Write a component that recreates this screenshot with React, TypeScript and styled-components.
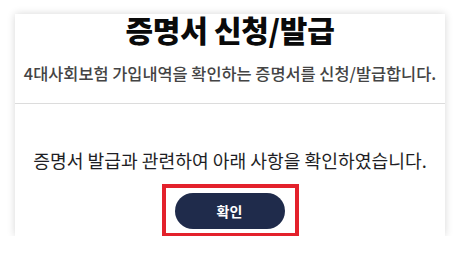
import styled, { createGlobalStyle } from 'styled-components';

const GlobalStyle = createGlobalStyle`
  html, body {
    margin: 0;
    padding: 0;
    background: #ffffff;
  }
  body {
    font-family: "Noto Sans CJK KR", "Noto Sans", sans-serif;
    color: #222;
  }
`;

const Card = styled.div`
  width: 430px;
  margin: 14px 0 0 15px;
  background: #fff;
  box-shadow: 0 0 8px rgba(0, 0, 0, 0.16);
  display: flex;
  flex-direction: column;
  align-items: stretch;
`;

const Header = styled.div`
  display: flex;
  flex-direction: column;
  align-items: center;
  padding: 0 0 19px;
  border-bottom: 1px solid #dcdcdc;
`;

const Title = styled.h1`
  margin: -2px 0 0;
  font-size: 30px;
  line-height: 34px;
  font-weight: 900;
  color: #0a0a0a;
  letter-spacing: -0.3px;
`;

const Subtitle = styled.p`
  margin: 16px 0 0;
  font-size: 16.4px;
  line-height: 22px;
  font-weight: 500;
  color: #444;
  letter-spacing: 0;
  white-space: nowrap;
`;

const Body = styled.div`
  display: flex;
  flex-direction: column;
  align-items: center;
  padding-top: 44px;
`;

const Notice = styled.p`
  margin: 0;
  font-size: 18.2px;
  line-height: 24px;
  font-weight: 400;
  color: #1e1e24;
  letter-spacing: 0;
  white-space: nowrap;
`;

const Highlight = styled.div`
  margin-top: 12px;
  margin-bottom: -1px;
  border: 4px solid #e3212b;
  padding: 5px 10px 4px 9px;
  display: flex;
`;

const ConfirmButton = styled.button`
  width: 110px;
  height: 36px;
  border: none;
  border-radius: 18px;
  background: #1f2b4b;
  color: #fff;
  font-family: inherit;
  font-size: 14px;
  font-weight: 700;
  cursor: pointer;
`;

export default function App() {
  return (
    <>
      <GlobalStyle />
      <Card>
        <Header>
          <Title>증명서 신청/발급</Title>
          <Subtitle>4대사회보험 가입내역을 확인하는 증명서를 신청/발급합니다.</Subtitle>
        </Header>
        <Body>
          <Notice>증명서 발급과 관련하여 아래 사항을 확인하였습니다.</Notice>
          <Highlight>
            <ConfirmButton type="button">확인</ConfirmButton>
          </Highlight>
        </Body>
      </Card>
    </>
  );
}
